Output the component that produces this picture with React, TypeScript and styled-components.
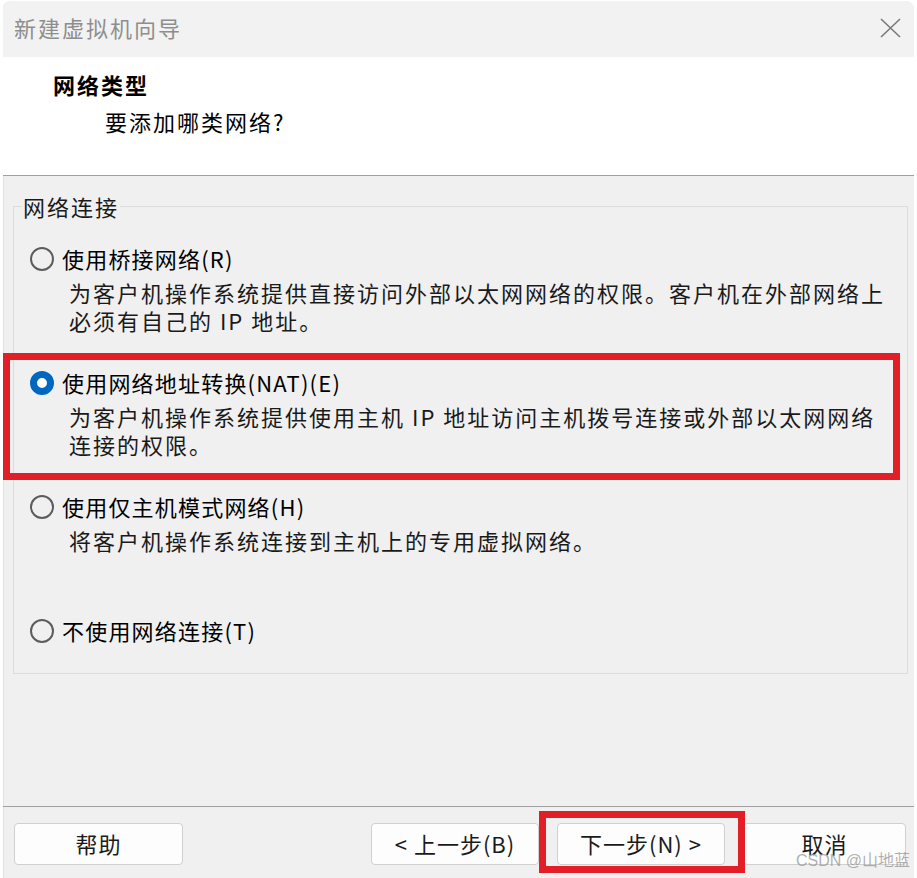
import React from 'react';
import styled, { createGlobalStyle } from 'styled-components';

const GlobalStyle = createGlobalStyle`
  html, body { margin: 0; padding: 0; background: #ffffff; }
  body { font-family: "Noto Sans CJK SC", "Noto Sans", sans-serif; }
`;

const Page = styled.div`
  position: relative;
  width: 917px;
  height: 878px;
  overflow: hidden;
  padding: 1px 3px 0 3px;
  box-sizing: border-box;
`;

const Window = styled.div`
  width: 911px;
  height: 877px;
  background: #f0f0f0;
  border-radius: 8px 8px 0 0;
  display: flex;
  flex-direction: column;
  box-shadow: inset 1px 0 0 #e2e2e2;
`;

const TitleBar = styled.div`
  flex: none;
  height: 56px;
  box-sizing: border-box;
  background: #f2f2f2;
  border-radius: 8px 8px 0 0;
  display: flex;
  align-items: center;
  justify-content: space-between;
  padding: 0 13px 4px 11px;
`;

const TitleText = styled.span`
  font-size: 22px;
  letter-spacing: 2px;
  line-height: 28px;
  color: #8e8e8e;
`;

const CloseWrap = styled.span`
  display: flex;
  margin-top: 2px;
`;

const Header = styled.div`
  flex: none;
  box-sizing: border-box;
  height: 119px;
  background: #ffffff;
  border-bottom: 1px solid #a0a0a0;
  padding: 12px 0 0 50px;
  display: flex;
  flex-direction: column;
`;

const Heading = styled.div`
  font-size: 22px;
  font-weight: 700;
  letter-spacing: 2px;
  line-height: 30px;
  color: #000;
`;

const SubHeading = styled.div`
  font-size: 22px;
  letter-spacing: 2px;
  line-height: 30px;
  color: #000;
  margin: 7px 0 0 52px;
`;

const Body = styled.div`
  flex: none;
  height: 630px;
  box-sizing: border-box;
  padding: 17px 6px 0 10px;
`;

const Group = styled.fieldset`
  margin: 0;
  border: 1px solid #dcdcdc;
  padding: 23px 16px 27px 16px;
  display: flex;
  flex-direction: column;
  gap: 32px;
`;

const Legend = styled.legend`
  margin-left: -8px;
  padding: 0 1px;
  font-size: 22px;
  letter-spacing: 2px;
  line-height: 26px;
  color: #1a1a1a;
`;

const Option = styled.div`
  display: grid;
  grid-template-columns: 24px 1fr;
  column-gap: 8px;
`;

const Radio = styled.span<{ $checked?: boolean }>`
  width: 24px;
  height: 24px;
  margin-top: 5px;
  border-radius: 50%;
  box-sizing: border-box;
  border: ${p => (p.$checked ? '7px solid #0067c0' : '2px solid #5c5c5c')};
  background: ${p => (p.$checked ? '#ffffff' : 'transparent')};
`;

const Label = styled.div`
  font-size: 22px;
  letter-spacing: 1.2px;
  line-height: 32px;
  color: #000;
  white-space: nowrap;
`;

const Desc = styled.div`
  grid-column: 2;
  margin-top: 4px;
  padding-left: 7px;
  min-height: 56px;
  font-size: 22px;
  letter-spacing: 2px;
  line-height: 28px;
  color: #1a1a1a;
  white-space: nowrap;
`;

const Footer = styled.div`
  flex: 1;
  border-top: 1px solid #a0a0a0;
  display: flex;
  align-items: flex-start;
  justify-content: space-between;
  padding: 16px 8px 0 11px;
`;

const ButtonRow = styled.div`
  display: flex;
  gap: 18px;
`;

const Button = styled.button<{ $w: number }>`
  width: ${p => p.$w}px;
  height: 42px;
  background: #fdfdfd;
  border: 1px solid #d0d0d0;
  border-radius: 4px;
  font-family: "Noto Sans CJK SC", "Noto Sans", sans-serif;
  font-size: 22px;
  letter-spacing: 1px;
  line-height: 28px;
  color: #1a1a1a;
  padding: 0 0 2px 0;
`;

const Highlight = styled.div<{ $x: number; $y: number; $w: number; $h: number }>`
  position: absolute;
  left: ${p => p.$x}px;
  top: ${p => p.$y}px;
  width: ${p => p.$w}px;
  height: ${p => p.$h}px;
  box-sizing: border-box;
  border: 7px solid #e21f26;
  pointer-events: none;
`;

const Watermark = styled.div`
  position: absolute;
  left: 796px;
  top: 851px;
  font-family: "Liberation Sans", "Noto Sans CJK SC", sans-serif;
  font-size: 16px;
  line-height: 20px;
  color: rgba(150, 150, 150, 0.75);
  white-space: nowrap;
`;

const CloseIcon = () => (
  <svg width="21" height="20" viewBox="0 0 21 20">
    <path d="M1 1 L20 19 M20 1 L1 19" stroke="#7a7a7a" strokeWidth="1.6" fill="none" />
  </svg>
);

export default function App() {
  return (
    <Page>
      <GlobalStyle />
      <Window>
        <TitleBar>
          <TitleText>新建虚拟机向导</TitleText>
          <CloseWrap>
            <CloseIcon />
          </CloseWrap>
        </TitleBar>
        <Header>
          <Heading>网络类型</Heading>
          <SubHeading>要添加哪类网络?</SubHeading>
        </Header>
        <Body>
          <Group>
            <Legend>网络连接</Legend>
            <Option>
              <Radio />
              <Label>使用桥接网络(R)</Label>
              <Desc>
                为客户机操作系统提供直接访问外部以太网网络的权限。客户机在外部网络上
                <br />
                必须有自己的 IP 地址。
              </Desc>
            </Option>
            <Option>
              <Radio $checked />
              <Label>使用网络地址转换(NAT)(E)</Label>
              <Desc>
                为客户机操作系统提供使用主机 IP 地址访问主机拨号连接或外部以太网网络
                <br />
                连接的权限。
              </Desc>
            </Option>
            <Option>
              <Radio />
              <Label>使用仅主机模式网络(H)</Label>
              <Desc>将客户机操作系统连接到主机上的专用虚拟网络。</Desc>
            </Option>
            <Option>
              <Radio />
              <Label>不使用网络连接(T)</Label>
            </Option>
          </Group>
        </Body>
        <Footer>
          <Button $w={169}>帮助</Button>
          <ButtonRow>
            <Button $w={168}>&lt; 上一步(B)</Button>
            <Button $w={168}>下一步(N) &gt;</Button>
            <Button $w={163}>取消</Button>
          </ButtonRow>
        </Footer>
      </Window>
      <Highlight $x={3} $y={353} $w={897} $h={127} />
      <Highlight $x={539} $y={811} $w={206} $h={62} />
      <Watermark>CSDN @山地蓝</Watermark>
    </Page>
  );
}
